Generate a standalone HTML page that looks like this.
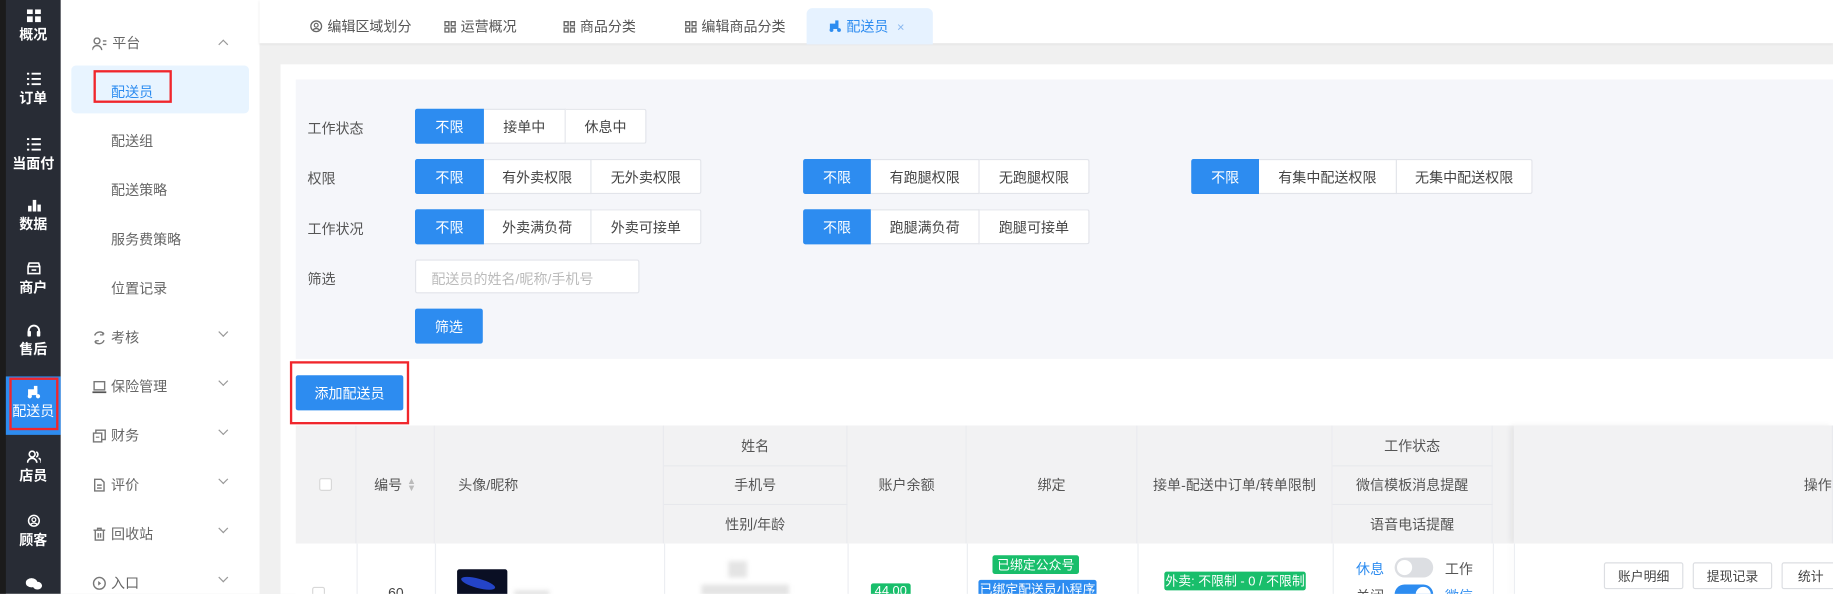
<!DOCTYPE html>
<html><head><meta charset="utf-8">
<style>
*{box-sizing:border-box;margin:0;padding:0}
html,body{width:1833px;height:593px;overflow:hidden;background:#f0f0f0}
body{font-family:"Liberation Sans","Noto Sans CJK SC",sans-serif;font-size:12px;color:#555}
#w{position:absolute;left:0;top:0;width:1568px;height:508px;transform:scale(1.169);transform-origin:0 0;background:#f0f0f0;overflow:hidden}
.a{position:absolute}
.side{left:0;top:0;width:52px;height:508px;background:#282c35}
.strip{left:0;top:0;width:5px;height:508px;background:#1b1b1b}
.si{position:absolute;left:5px;width:47px;text-align:center;color:#fff;font-size:12px;font-weight:bold}
.si .ic{display:block;margin:0 auto 2px;width:12px;height:11px}
.menu{left:52px;top:0;width:170px;height:508px;background:#fff}
.mi{position:absolute;left:43px;font-size:12px;color:#666}
.mh{position:absolute;left:27px;font-size:12px;color:#666}
.mh svg{vertical-align:-2px;margin-right:4px}
.chev{position:absolute;left:136px;width:6px;height:6px;border-right:1px solid #999;border-bottom:1px solid #999;transform:rotate(45deg)}
.tabbar{left:222px;top:0;width:1346px;height:37px;background:#fff;box-shadow:0 1px 2px #e2e2e2}
.tab{position:absolute;top:14px;font-size:12px;color:#555}
.tab svg{vertical-align:-1px;margin-right:4px}
.card{left:240px;top:55px;width:1340px;height:460px;background:#fff}
.panel{left:253px;top:68px;width:1320px;height:239px;background:#f5f6fa}
.lbl{position:absolute;left:263px;font-size:12px;color:#555}
.grp{position:absolute;display:flex;height:30px}
.grp span{display:flex;align-items:center;justify-content:center;height:30px;background:#fff;border:1px solid #e2e4ea;border-left:none;font-size:12px;color:#444}
.grp span:first-child{background:#2d8cf0;color:#fff;border:1px solid #2d8cf0;border-radius:2px 0 0 2px}
.grp span:last-child{border-radius:0 2px 2px 0}
.btnb{position:absolute;background:#2d8cf0;color:#fff;display:flex;align-items:center;justify-content:center;border-radius:2px;font-size:12px}
.th{position:absolute;background:#f2f2f3;color:#555;display:flex;align-items:center;justify-content:center;font-size:12px;border-right:1px solid #e9eaee}
.hl{position:absolute;height:1px;background:#e7e8ec}
.badge{position:absolute;color:#fff;font-size:11px;border-radius:2px;display:flex;align-items:center;justify-content:center}
.ob{position:absolute;top:481px;height:23px;border:1px solid #dcdee2;background:#fff;font-size:11px;color:#444;display:flex;align-items:center;justify-content:center;border-radius:2px}
.blur{position:absolute;background:#e4e4e4;filter:blur(2px)}
</style></head><body><div id="w">

<div class="a side"></div><div class="a strip"></div>
<div class="si" style="top:8px"><svg class="ic" viewBox="0 0 12 11"><rect x="0" y="0" width="5" height="4" fill="#fff"/><rect x="7" y="0" width="5" height="4" fill="#fff"/><rect x="0" y="6" width="5" height="5" fill="#fff"/><rect x="7" y="6" width="5" height="5" fill="#fff"/></svg>概况</div>
<div class="si" style="top:62px"><svg class="ic" viewBox="0 0 12 11"><path d="M0 1h2M4 1h8M0 5.5h2M4 5.5h8M0 10h2M4 10h8" stroke="#fff" stroke-width="1.6"/></svg>订单</div>
<div class="si" style="top:118px"><svg class="ic" viewBox="0 0 12 11"><path d="M0 1h2M4 1h8M0 5.5h2M4 5.5h8M0 10h2M4 10h8" stroke="#fff" stroke-width="1.6"/></svg>当面付</div>
<div class="si" style="top:170px"><svg class="ic" viewBox="0 0 12 11"><rect x="1" y="6" width="3" height="5" fill="#fff"/><rect x="5" y="1" width="3" height="10" fill="#fff"/><rect x="9" y="5" width="3" height="6" fill="#fff"/></svg>数据</div>
<div class="si" style="top:224px"><svg class="ic" viewBox="0 0 12 11"><path d="M1 4L2 1h8l1 3v6H1z M1 4h10 M4 7h4" stroke="#fff" stroke-width="1.4" fill="none"/></svg>商户</div>
<div class="si" style="top:277px"><svg class="ic" viewBox="0 0 12 11"><path d="M1.5 8V6a4.5 4.5 0 0 1 9 0v2" stroke="#fff" stroke-width="1.6" fill="none"/><rect x="0.5" y="6" width="3" height="5" rx="1" fill="#fff"/><rect x="8.5" y="6" width="3" height="5" rx="1" fill="#fff"/></svg>售后</div>
<div class="a" style="left:5px;top:322px;width:47px;height:50px;background:#2d8cf0"></div>
<div class="a" style="left:8px;top:323px;width:42px;height:45px;border:2px solid #f0262c"></div>
<div class="si" style="top:330px;font-weight:normal"><svg class="ic" viewBox="0 0 12 11"><rect x="1" y="3" width="8" height="5" fill="#fff"/><rect x="6" y="0" width="3" height="4" fill="#fff"/><circle cx="2.5" cy="9" r="1.8" fill="#fff"/><circle cx="9.5" cy="9" r="1.8" fill="#fff"/></svg>配送员</div>
<div class="si" style="top:385px"><svg class="ic" viewBox="0 0 12 11"><circle cx="4.5" cy="3.5" r="2.5" stroke="#fff" stroke-width="1.4" fill="none"/><path d="M0.5 11a4 4 0 0 1 8 0M8 1.5a2.5 2.5 0 0 1 0 4.5M10 7a3 3 0 0 1 2 4" stroke="#fff" stroke-width="1.4" fill="none"/></svg>店员</div>
<div class="si" style="top:440px"><svg class="ic" viewBox="0 0 12 12"><circle cx="6" cy="6" r="5" stroke="#fff" stroke-width="1.4" fill="none"/><circle cx="6" cy="5" r="1.8" stroke="#fff" stroke-width="1.2" fill="none"/><path d="M3 9.5a3.5 3 0 0 1 6 0" stroke="#fff" stroke-width="1.2" fill="none"/></svg>顾客</div>
<div class="si" style="top:494px"><svg class="ic" viewBox="0 0 14 11" style="width:14px"><ellipse cx="5" cy="4.5" rx="5" ry="4" fill="#fff"/><ellipse cx="10" cy="7" rx="4" ry="3.3" fill="#fff"/></svg></div>

<div class="a menu"></div>
<div class="mh" style="left:79px;top:28px"><svg width="13" height="11" viewBox="0 0 13 11"><circle cx="4" cy="3" r="2.5" stroke="#777" stroke-width="1.2" fill="none"/><path d="M0 11a4 4 0 0 1 8 0M9 3h3M9 6h3" stroke="#777" stroke-width="1.2" fill="none"/></svg>平台</div>
<div class="chev" style="left:188px;top:35px;transform:rotate(225deg)"></div>
<div class="a" style="left:61px;top:56px;width:152px;height:41px;background:#e8f4ff;border-radius:4px"></div>
<div class="a" style="left:80px;top:60px;width:67px;height:28px;border:2px solid #f0262c"></div>
<div class="a" style="left:95px;top:70px;color:#2d8cf0;font-size:12px">配送员</div>
<div class="a mi" style="left:95px;top:112px">配送组</div>
<div class="a mi" style="left:95px;top:154px">配送策略</div>
<div class="a mi" style="left:95px;top:196px">服务费策略</div>
<div class="a mi" style="left:95px;top:238px">位置记录</div>
<div class="mh" style="left:79px;top:280px"><svg width="12" height="12" viewBox="0 0 12 12"><path d="M2 4a4.5 4.5 0 0 1 8 -1M10 8a4.5 4.5 0 0 1-8 1" stroke="#777" stroke-width="1.2" fill="none"/><path d="M9 1v2.5h-2.5M3 11v-2.5h2.5" stroke="#777" stroke-width="1" fill="none"/></svg>考核</div><div class="chev" style="left:188px;top:281px"></div>
<div class="mh" style="left:79px;top:322px"><svg width="12" height="12" viewBox="0 0 12 12"><rect x="1.5" y="1.5" width="9" height="7" stroke="#777" stroke-width="1.2" fill="none"/><path d="M0 10.5h12" stroke="#555" stroke-width="1.5"/></svg>保险管理</div><div class="chev" style="left:188px;top:323px"></div>
<div class="mh" style="left:79px;top:364px"><svg width="12" height="12" viewBox="0 0 12 12"><rect x="3" y="1" width="8" height="8" stroke="#777" stroke-width="1.2" fill="none"/><rect x="1" y="3.5" width="7" height="7.5" stroke="#777" stroke-width="1.2" fill="#fff"/><path d="M3 7h3" stroke="#777"/></svg>财务</div><div class="chev" style="left:188px;top:365px"></div>
<div class="mh" style="left:79px;top:406px"><svg width="12" height="12" viewBox="0 0 12 12"><path d="M2 1h5.5l2.5 2.5V11H2z M4 6h4M4 8.5h4" stroke="#777" stroke-width="1.2" fill="none"/></svg>评价</div><div class="chev" style="left:188px;top:407px"></div>
<div class="mh" style="left:79px;top:448px"><svg width="12" height="12" viewBox="0 0 12 12"><path d="M1 2.5h10M4.5 2.5V1h3v1.5M2.5 2.5V11h7V2.5M5 5v4M7 5v4" stroke="#777" stroke-width="1.2" fill="none"/></svg>回收站</div><div class="chev" style="left:188px;top:449px"></div>
<div class="mh" style="left:79px;top:490px"><svg width="12" height="12" viewBox="0 0 12 12"><circle cx="6" cy="6" r="5" stroke="#777" stroke-width="1.2" fill="none"/><path d="M5 4l2.5 2L5 8z" fill="#777"/></svg>入口</div><div class="chev" style="left:188px;top:491px"></div>

<div class="a tabbar"></div>
<div class="tab" style="left:265px"><svg width="11" height="11" viewBox="0 0 12 12"><circle cx="6" cy="6" r="5" stroke="#666" stroke-width="1.2" fill="none"/><circle cx="6" cy="5" r="1.8" stroke="#666" stroke-width="1.1" fill="none"/><path d="M3 9.5a3.5 3 0 0 1 6 0" stroke="#666" stroke-width="1.1" fill="none"/></svg>编辑区域划分</div>
<div class="tab" style="left:380px"><svg width="10" height="10" viewBox="0 0 10 10"><g stroke="#666" stroke-width="1.2" fill="none"><rect x="0.6" y="0.6" width="3.4" height="3.4"/><rect x="6" y="0.6" width="3.4" height="3.4"/><rect x="0.6" y="6" width="3.4" height="3.4"/><rect x="6" y="6" width="3.4" height="3.4"/></g></svg>运营概况</div>
<div class="tab" style="left:482px"><svg width="10" height="10" viewBox="0 0 10 10"><g stroke="#666" stroke-width="1.2" fill="none"><rect x="0.6" y="0.6" width="3.4" height="3.4"/><rect x="6" y="0.6" width="3.4" height="3.4"/><rect x="0.6" y="6" width="3.4" height="3.4"/><rect x="6" y="6" width="3.4" height="3.4"/></g></svg>商品分类</div>
<div class="tab" style="left:586px"><svg width="10" height="10" viewBox="0 0 10 10"><g stroke="#666" stroke-width="1.2" fill="none"><rect x="0.6" y="0.6" width="3.4" height="3.4"/><rect x="6" y="0.6" width="3.4" height="3.4"/><rect x="0.6" y="6" width="3.4" height="3.4"/><rect x="6" y="6" width="3.4" height="3.4"/></g></svg>编辑商品分类</div>
<div class="a" style="left:690px;top:7px;width:108px;height:31px;background:#e6f2ff;border-radius:5px 5px 0 0"></div>
<div class="tab" style="left:709px;color:#2d8cf0"><svg width="11" height="11" viewBox="0 0 12 11"><rect x="1" y="3" width="8" height="5" fill="#2d8cf0"/><rect x="6" y="0" width="3" height="4" fill="#2d8cf0"/><circle cx="2.5" cy="9" r="1.8" fill="#2d8cf0"/><circle cx="9.5" cy="9" r="1.8" fill="#2d8cf0"/></svg>配送员 <span style="color:#8ab8f0;font-size:11px;margin-left:4px">×</span></div>

<div class="a card"></div>
<div class="a panel"></div>
<div class="lbl" style="top:101px">工作状态</div>
<div class="lbl" style="top:144px">权限</div>
<div class="lbl" style="top:187px">工作状况</div>
<div class="lbl" style="top:230px">筛选</div>
<div class="grp" style="left:355px;top:93px"><span style="width:59px">不限</span><span style="width:70px">接单中</span><span style="width:69px">休息中</span></div>
<div class="grp" style="left:355px;top:136px"><span style="width:59px">不限</span><span style="width:92px">有外卖权限</span><span style="width:94px">无外卖权限</span></div>
<div class="grp" style="left:687px;top:136px"><span style="width:58px">不限</span><span style="width:93px">有跑腿权限</span><span style="width:94px">无跑腿权限</span></div>
<div class="grp" style="left:1019px;top:136px"><span style="width:58px">不限</span><span style="width:118px">有集中配送权限</span><span style="width:116px">无集中配送权限</span></div>
<div class="grp" style="left:355px;top:179px"><span style="width:59px">不限</span><span style="width:92px">外卖满负荷</span><span style="width:94px">外卖可接单</span></div>
<div class="grp" style="left:687px;top:179px"><span style="width:58px">不限</span><span style="width:93px">跑腿满负荷</span><span style="width:94px">跑腿可接单</span></div>
<div class="a" style="left:355px;top:222px;width:192px;height:29px;background:#fff;border:1px solid #e2e4ea;border-radius:2px;color:#bbb;padding:7px 13px;font-size:12px">配送员的姓名/昵称/手机号</div>
<div class="btnb" style="left:355px;top:264px;width:58px;height:30px">筛选</div>

<div class="a" style="left:248px;top:309px;width:102px;height:54px;border:2px solid #f0262c"></div>
<div class="btnb" style="left:253px;top:321px;width:92px;height:30px">添加配送员</div>

<div class="th" style="left:253px;top:364px;width:52px;height:101px"><span style="width:11px;height:11px;border:1px solid #d8d8d8;background:#fff;border-radius:2px"></span></div>
<div class="th" style="left:305px;top:364px;width:67px;height:101px">编号 <span style="color:#bbb;font-size:8px;margin-left:4px;line-height:6px">▲<br>▼</span></div>
<div class="th" style="left:372px;top:364px;width:196px;height:101px;justify-content:flex-start;padding-left:20px">头像/昵称</div>
<div class="th" style="left:568px;top:364px;width:157px;height:34px">姓名</div>
<div class="th" style="left:568px;top:398px;width:157px;height:33px">手机号</div>
<div class="th" style="left:568px;top:431px;width:157px;height:34px">性别/年龄</div>
<div class="hl" style="left:568px;top:398px;width:157px"></div><div class="hl" style="left:568px;top:431px;width:157px"></div>
<div class="th" style="left:725px;top:364px;width:102px;height:101px">账户余额</div>
<div class="th" style="left:827px;top:364px;width:146px;height:101px">绑定</div>
<div class="th" style="left:973px;top:364px;width:167px;height:101px">接单-配送中订单/转单限制</div>
<div class="th" style="left:1140px;top:364px;width:137px;height:34px">工作状态</div>
<div class="th" style="left:1140px;top:398px;width:137px;height:33px">微信模板消息提醒</div>
<div class="th" style="left:1140px;top:431px;width:137px;height:34px">语音电话提醒</div>
<div class="hl" style="left:1140px;top:398px;width:155px"></div><div class="hl" style="left:1140px;top:431px;width:155px"></div>
<div class="th" style="left:1277px;top:364px;width:18px;height:101px;border:none"></div>
<div class="th" style="left:1295px;top:364px;width:273px;height:101px;justify-content:flex-end;padding-right:0;box-shadow:-3px 0 5px rgba(0,0,0,.06)">操作</div>

<div class="a" style="left:253px;top:465px;width:1315px;height:50px;background:#fff"></div>
<div class="a" style="left:305px;top:465px;width:1px;height:50px;background:#eceef2"></div>
<div class="a" style="left:372px;top:465px;width:1px;height:50px;background:#eceef2"></div>
<div class="a" style="left:568px;top:465px;width:1px;height:50px;background:#eceef2"></div>
<div class="a" style="left:725px;top:465px;width:1px;height:50px;background:#eceef2"></div>
<div class="a" style="left:827px;top:465px;width:1px;height:50px;background:#eceef2"></div>
<div class="a" style="left:973px;top:465px;width:1px;height:50px;background:#eceef2"></div>
<div class="a" style="left:1140px;top:465px;width:1px;height:50px;background:#eceef2"></div>
<div class="a" style="left:1277px;top:465px;width:1px;height:50px;background:#eceef2"></div>
<div class="a" style="left:1295px;top:465px;width:1px;height:50px;background:#eceef2;box-shadow:-3px 0 5px rgba(0,0,0,.06)"></div>
<div class="a" style="left:267px;top:502px;width:11px;height:11px;border:1px solid #d8d8d8;border-radius:2px"></div>
<div class="a" style="left:332px;top:500px;color:#444">60</div>
<div class="a" style="left:391px;top:487px;width:43px;height:30px;background:#0a0f24;border-radius:2px;overflow:hidden"><div style="position:absolute;left:3px;top:8px;width:30px;height:8px;background:#2444c8;border-radius:50%;transform:rotate(15deg)"></div></div>
<div class="blur" style="left:440px;top:505px;width:30px;height:10px"></div>
<div class="blur" style="left:623px;top:480px;width:16px;height:14px"></div>
<div class="blur" style="left:600px;top:500px;width:75px;height:10px"></div>
<div class="badge" style="left:745px;top:499px;width:34px;height:14px;background:#19be6b">44.00</div>
<div class="badge" style="left:849px;top:475px;width:74px;height:16px;background:#19be6b">已绑定公众号</div>
<div class="badge" style="left:837px;top:496px;width:101px;height:16px;background:#2d8cf0">已绑定配送员小程序</div>
<div class="badge" style="left:996px;top:489px;width:121px;height:16px;background:#19be6b">外卖: 不限制 - 0 / 不限制</div>
<div class="a" style="left:1160px;top:478px;color:#2d8cf0">休息</div>
<div class="a" style="left:1193px;top:477px;width:33px;height:17px;border-radius:9px;background:#dcdee2"><div style="position:absolute;left:2px;top:2px;width:13px;height:13px;border-radius:50%;background:#fff"></div></div>
<div class="a" style="left:1236px;top:478px;color:#555">工作</div>
<div class="a" style="left:1160px;top:501px;color:#555">关闭</div>
<div class="a" style="left:1193px;top:500px;width:33px;height:17px;border-radius:9px;background:#2d8cf0"><div style="position:absolute;right:2px;top:2px;width:13px;height:13px;border-radius:50%;background:#fff"></div></div>
<div class="a" style="left:1236px;top:501px;color:#2d8cf0">微信</div>
<div class="ob" style="left:1372px;width:68px">账户明细</div>
<div class="ob" style="left:1448px;width:68px">提现记录</div>
<div class="ob" style="left:1524px;width:50px">统计</div>
</div></body></html>
